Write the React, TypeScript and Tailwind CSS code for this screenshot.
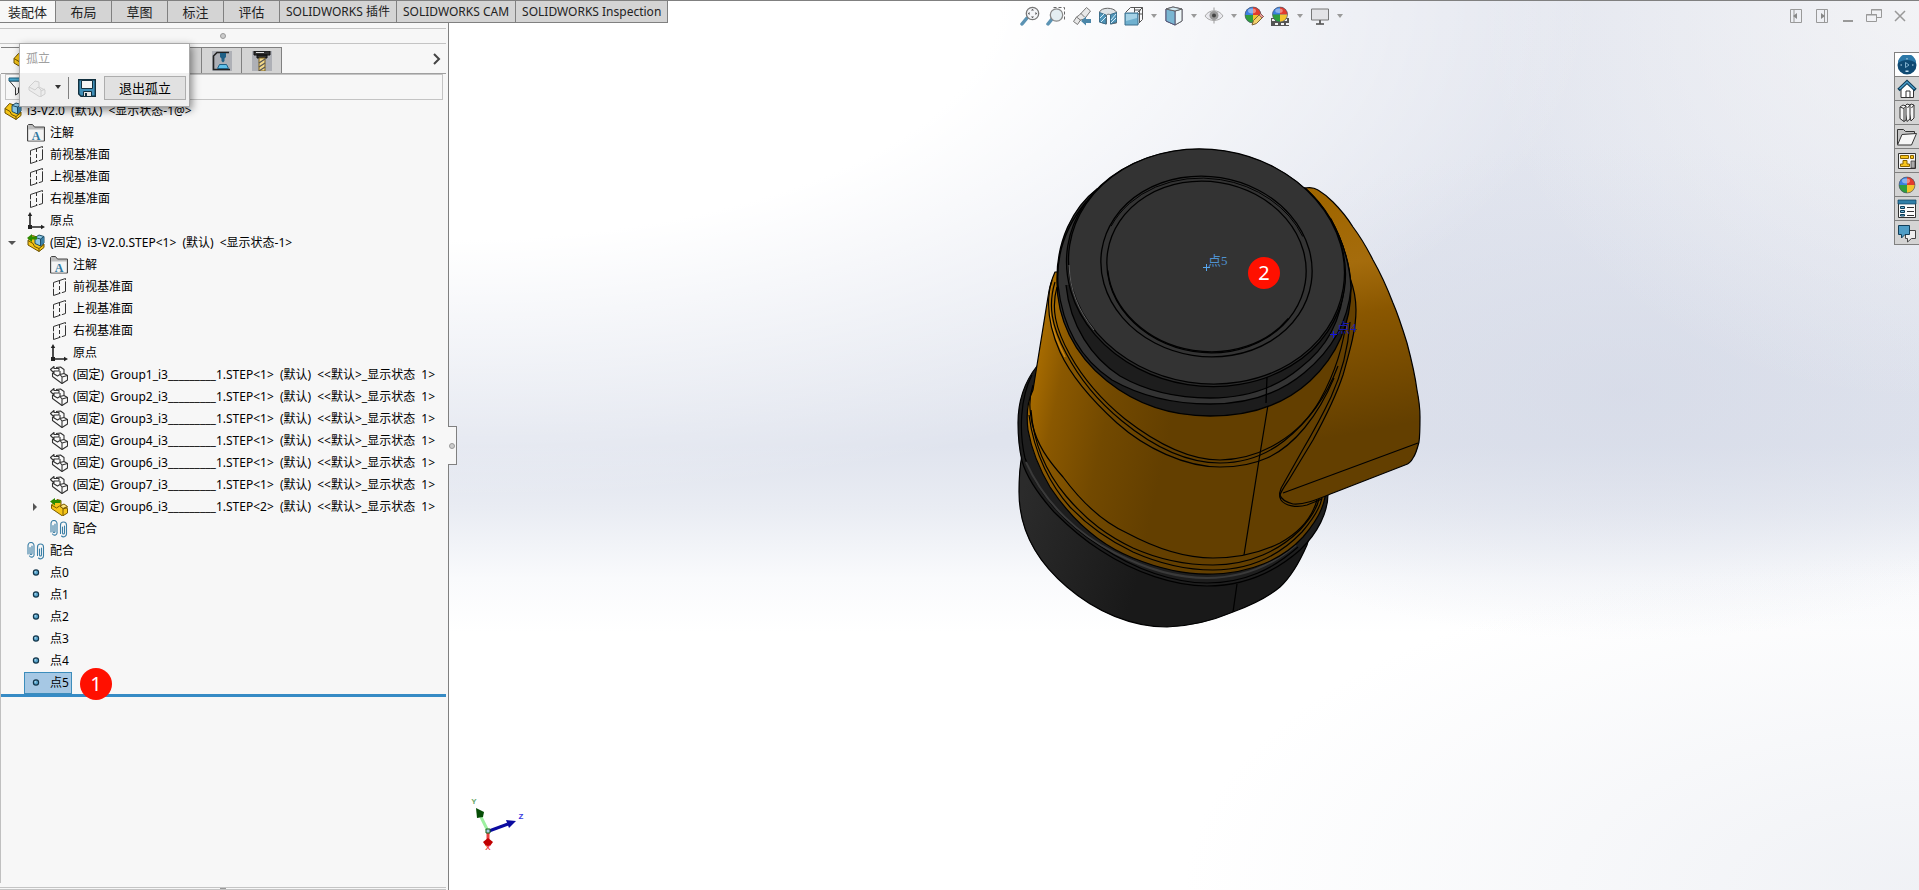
import { useState, type ReactNode } from "react";

const UI_FONT = "font-['Noto_Sans','Noto_Sans_CJK_SC',sans-serif]";

/* ------------------------------------------------------------------ icons */

function Icon({ children, className = "size-5", box = 20 }: { children: ReactNode; className?: string; box?: number }) {
  return (
    <svg viewBox={`0 0 ${box} ${box}`} className={`shrink-0 ${className}`} fill="none" aria-hidden="true">
      {children}
    </svg>
  );
}

const tree = "size-[18px]";

function AssemblyIcon({ fixed = false }: { fixed?: boolean }) {
  return (
    <Icon box={18} className={tree}>
      <path d="M1 6.500 5.500 1.500 10 3v5l7 2v3.500L12 17.500 1 11z" fill="#f5c518" stroke="#6b5000" />
      <path d="m1 6.500 5 3 1.500 3 4.500 2v3M12 14.500l5-4" stroke="#6b5000" />
      <path d="m8 3.500 4-2.500 5 1.500v6.500l-3.500 3L8 9.500z" fill="#8cc9e6" stroke="#1f4e66" />
      <path d="M13.500 5 17 2.500V9l-3.500 3z" fill="#3a7fa6" />
      <path d="M8 3.500 13.500 5 17 2.500M13.500 5v7" stroke="#1f4e66" />
      {fixed && <path d="M0 4 5 0v2.500h5v3H5V8z" fill="#2e8b00" />}
    </Icon>
  );
}

function AnnotationIcon() {
  return (
    <Icon box={18} className={tree}>
      <path d="M.5 17V1.500L1.500.500h4l2 2.500h10v14z" fill="#bdbdbd" stroke="#444" />
      <path d="M1.500 5.500h15v11h-15z" fill="#f4f4f4" />
      <text x="9" y="15.500" fontSize="12" fontWeight="700" textAnchor="middle" fill="#2f77a0" className="font-['Liberation_Serif',serif]">A</text>
    </Icon>
  );
}

function PlaneIcon() {
  return (
    <Icon box={18} className={tree}>
      <path d="M3.500 4.500 15.500.500v13l-12 4z" stroke="#333" strokeDasharray="14 1.500" />
      <path d="M9.500 2v14" stroke="#333" strokeDasharray="4 2" />
    </Icon>
  );
}

function OriginIcon() {
  return (
    <Icon box={18} className={tree}>
      <path d="M3 15V3M3 15h12" stroke="#222" strokeWidth="1.600" />
      <path d="M.8 4 3 0l2.200 4zM14 12.800l4 2.200-4 2.200zM1 13h4v4H1z" fill="#222" />
    </Icon>
  );
}

function PartIcon() {
  return (
    <Icon box={18} className={tree}>
      <g stroke="#333" strokeWidth="1.100" strokeLinejoin="round" fill="#fafafa">
        <path d="M2.500 7v3.500L12 17.500l5.500-3.500V9.500L14 7.500V3.500L10.500 1 6 1.500" />
        <path d="m2.500 7 5 3 2.500-1.500 2 2.500v6.500M12 11l5.500-1.500M10 8.500l4-1M10 8.500V5" fill="none" />
        <path d="M.5 3.500 4 .5v2h5v2.500H4v2z" />
      </g>
    </Icon>
  );
}

function FixedPartIcon() {
  return (
    <Icon box={18} className={tree}>
      <g stroke="#7a5a00" strokeLinejoin="round">
        <path d="M1.500 7 7 1.500l4 1v5l6.500 3V15l-5 3-11-7.500z" fill="#f5c518" />
        <path d="m1.500 7 5 3 3-2 3.500 2.500V18M13 11l4.500-1.500" />
        <path d="m10 8 4-2 3.500 2.500-4.500 2z" fill="#ffe680" />
      </g>
      <path d="M0 3.500 5 0v2h5.500v3H5v2.500z" fill="#2e8b00" />
    </Icon>
  );
}

function MatesIcon() {
  return (
    <Icon box={18} className={tree}>
      <g stroke="#3b7fa6" strokeWidth="1.100" strokeLinecap="round">
        <path d="M3 5.500v6a1 1 0 0 0 2 0V4M1 12V3.500a3 3 0 0 1 6 0V12a2.500 2.500 0 0 1-4.500 2" />
        <path d="M12.500 7v6a1 1 0 0 0 2 0V6M10.500 13.500V5a3 3 0 0 1 6 0v8.500a3 3 0 0 1-5 2.500" />
      </g>
    </Icon>
  );
}

function PointIcon() {
  return (
    <Icon box={18} className={tree}>
      <circle cx="9" cy="8.500" r="2.600" fill="#5aa5cc" stroke="#12354a" strokeWidth="1.200" />
      <circle cx="8.300" cy="7.800" r=".9" fill="#a9d6ec" />
    </Icon>
  );
}

function Caret() {
  return (
    <svg viewBox="0 0 8 5" className="h-[5px] w-2 shrink-0" aria-hidden="true">
      <path d="M1 0h6L4 4z" fill="#9a9a9a" />
    </svg>
  );
}

function Sphere({ r, cx, cy }: { r: number; cx: number; cy: number }) {
  return (
    <g>
      <circle cx={cx} cy={cy} r={r} fill="#2a66d8" />
      <path d={`M${cx} ${cy}V${cy - r}A${r} ${r} 0 0 1 ${cx + r} ${cy}z`} fill="#e23b2e" />
      <path d={`M${cx} ${cy}V${cy - r}A${r} ${r} 0 0 0 ${cx - r} ${cy}z`} fill="#3c7fe0" />
      <path d={`M${cx} ${cy}H${cx - r}A${r} ${r} 0 0 0 ${cx} ${cy + r}z`} fill="#2f9e3e" />
      <path d={`M${cx} ${cy}H${cx + r}A${r} ${r} 0 0 1 ${cx} ${cy + r}z`} fill="#f2c42c" />
      <ellipse cx={cx - 1} cy={cy - r * 0.5} rx={r * 0.5} ry={r * 0.3} fill="#fff" opacity=".4" />
      <circle cx={cx} cy={cy} r={r} stroke="#555" strokeWidth=".6" />
    </g>
  );
}

const hudIcons: { name: string; menu?: boolean; art: ReactNode }[] = [
  {
    name: "整屏显示全图",
    art: (
      <>
        <path d="m7 12-5 6" stroke="#5b93b3" strokeWidth="3.500" strokeLinecap="round" />
        <circle cx="12.500" cy="7.500" r="6.200" fill="#f4f5f8" stroke="#777" strokeWidth="1.300" />
        <path d="m12.500 2.800 1.500 1.800h-3zM12.500 12.200l1.500-1.800h-3zM7.800 7.500l1.800-1.500v3zM17.200 7.500 15.400 6v3z" fill="#555" />
      </>
    ),
  },
  {
    name: "局部放大",
    art: (
      <>
        <path d="M7.500 1.500h11v12" stroke="#666" strokeDasharray="3 2" />
        <path d="m6 13-4 5" stroke="#5b93b3" strokeWidth="3.500" strokeLinecap="round" />
        <circle cx="10.500" cy="9" r="6.200" fill="#e4eef2" stroke="#888" strokeWidth="1.300" />
      </>
    ),
  },
  {
    name: "上一视图",
    art: (
      <>
        <path d="m14.500 1.500 4 3.500-6 8-4 1-3 4.500-4-3 3-4.500 3-2z" fill="#e8e8e8" stroke="#777" />
        <path d="m8.500 7 4 4M4.500 11l4.500 3.500" stroke="#777" />
        <path d="m9 15 5-4.500V13h5v4h-5v2.500z" fill="#4b86a8" />
      </>
    ),
  },
  {
    name: "剖面视图",
    art: (
      <>
        <path d="M1.500 6c2-5 14-5 17 0v11l-6 1V9c-1-1-3-1-4 0v9l-7-2z" fill="#dfe3e6" stroke="#666" />
        <path d="M1.500 6.500 8 9v9l-6.500-2zM12.500 8.500l6-2V16l-6 2z" fill="#4f94b8" stroke="#3d6f8c" />
        <path d="m2 12 4-4M3 16l5-5M13 14l5-6M13 17l5-5" stroke="#d8eefa" />
      </>
    ),
  },
  {
    name: "视图定向",
    menu: true,
    art: (
      <>
        <path d="M6.500 1.500h12v12l-4 4M1.500 6.500l5-5M13.500 6.500l5-5M10.500 1.500v5M18 8h-4M10 4h7M15.500 4v12" stroke="#555" />
        <path d="M1 7h13v12H1z" fill="#6fb0cf" stroke="#3d6f8c" />
        <path d="M2 8h11v4L2 15z" fill="#a5d2e6" />
      </>
    ),
  },
  {
    name: "显示样式",
    menu: true,
    art: (
      <>
        <path d="m2 3 7-2 9 2v12l-7 4-9-4z" fill="#a9d3e6" stroke="#557" />
        <path d="m11 5 7-2v12l-7 4z" fill="#eef6fa" stroke="#666" />
        <path d="m2 3 9 2v14l-9-4z" fill="#7ab6d2" stroke="#557" />
        <path d="m2 3 7-2 9 2-7 2z" fill="#d5ebf4" stroke="#666" />
      </>
    ),
  },
  {
    name: "隐藏/显示项目",
    menu: true,
    art: (
      <>
        <path d="M1 10c4-7 14-7 18 0-4 6-14 6-18 0z" fill="#e9e9ee" stroke="#aaa" />
        <circle cx="10" cy="9.500" r="4.500" fill="#999" />
        <circle cx="10" cy="9.500" r="2" fill="#444" />
        <path d="M10 1.500v3M10 14.500v3" stroke="#999" />
      </>
    ),
  },
  {
    name: "编辑外观",
    art: (
      <>
        <Sphere cx={9} cy={9} r={8} />
        <path d="m8 19 1.500-4.500 7-7 3 3-7 7z" fill="#f3d06a" stroke="#7d6235" />
        <path d="m15 9 1.500-1.500 3 3L18 12z" fill="#e69a9a" stroke="#7d4a4a" strokeWidth=".7" />
      </>
    ),
  },
  {
    name: "应用布景",
    menu: true,
    art: (
      <>
        <path d="M1 12h18v8H1z" fill="#555" />
        <path d="M2 13h3v2H2zM8 13h3v2H8zM14 13h3v2h-3zM5 17h3v2H5zM11 17h3v2h-3zM16 17h3v2h-3z" fill="#f2f2f2" />
        <Sphere cx={10} cy={8.5} r={7.5} />
      </>
    ),
  },
  {
    name: "视图设定",
    menu: true,
    art: (
      <>
        <path d="M1.500 3h17v11h-17z" fill="#e3e3e6" stroke="#777" />
        <path d="M10 14v4" stroke="#666" strokeWidth="2" />
        <path d="M6 18h8" stroke="#555" strokeWidth="1.600" />
      </>
    ),
  },
];

const windowIcons: { name: string; art: ReactNode }[] = [
  { name: "展开左窗格", art: <path d="M4.500 3.500h11v13h-11zM8 4v12" /> },
  { name: "展开右窗格", art: <path d="M4.500 3.500h11v13h-11zM12.500 4v12" /> },
  { name: "最小化", art: <path d="M5 15h10" strokeWidth="2" /> },
  { name: "还原", art: <path d="M7.500 8V3.500h10v8H13M2.500 8.500h10v7h-10zM7 4h11M2 9h11" /> },
  { name: "关闭", art: <path d="m5 5 10 10M15 5 5 15" strokeWidth="1.500" /> },
];

const taskIcons: { name: string; art: ReactNode }[] = [
  {
    name: "3DEXPERIENCE",
    art: (
      <>
        <circle cx="10" cy="10" r="9.500" fill="#0f4a73" />
        <path d="M1 8a9 9 0 0 1 18 0c-5-4-13-4-18 0z" fill="#2c78a8" />
        <path d="M8.500 7.500 12 10l-3.500 2.500z" stroke="#9cc8e2" strokeWidth=".8" />
        <path d="M9.500 3h1v1.500h-1zM3.500 9.500H5v1H3.500zM15 9.500h1.500v1H15zM8.500 15.500h3V17h-3z" fill="#c4def0" />
      </>
    ),
  },
  {
    name: "SOLIDWORKS 资源",
    art: (
      <>
        <path d="M4 10v8.500h12.500V9L10 4z" fill="#fff" stroke="#333" />
        <path d="M9 18v-6h4v6" stroke="#333" />
        <path d="m1.500 11 8.500-8 8.500 8" stroke="#0d3d59" strokeWidth="3.500" />
        <path d="m2.500 10 7.500-7 7.500 7" stroke="#4a9cc9" strokeWidth="1.500" />
      </>
    ),
  },
  {
    name: "设计库",
    art: (
      <g stroke="#333" fill="#f4f4f4" strokeLinejoin="round">
        <path d="m11 4 3-3 3 1v13l-3 3z" />
        <path d="m7 4 3-3 3 1v14l-3 2.500z" />
        <path d="m3 4 3-2 3 1v14l-2 1.500-4-3z" />
        <path d="m3 4 4 1.500 2-2.500M7 5.500v13M10.500 5l2.500-3M14.500 5 17 2" />
      </g>
    ),
  },
  {
    name: "文件探索器",
    art: (
      <>
        <path d="M.5 17V2.500h6l2 2h9v4" fill="#c4c4c4" stroke="#333" />
        <path d="m5 7.500 14.500-1-5 11.500H.5z" fill="#f6f6f6" stroke="#333" />
      </>
    ),
  },
  {
    name: "视图调色板",
    art: (
      <>
        <path d="M1.500 2.500h17v15h-17z" fill="#f4f4f4" stroke="#333" />
        <path d="M3.500 4.500h8v3h-8zM13.500 4.500h3v3h-3zM6 9.500h4v3.500h2.500v2.500h-9V13H6z" fill="#f8c51c" stroke="#8a6400" />
        <path d="M14 10h4v7h-4z" fill="#aaa" stroke="#333" strokeWidth=".7" />
      </>
    ),
  },
  { name: "外观、布景和贴图", art: <Sphere cx={10} cy={10} r={8} /> },
  {
    name: "自定义属性",
    art: (
      <>
        <path d="M1.500 1.500h17v17h-17z" fill="#fbfbfb" stroke="#333" />
        <path d="M1 1h18v4H1z" fill="#2f7fa8" stroke="#0d3d59" strokeWidth=".7" />
        <path d="M3.500 7.500h4v2h-4zM3.500 11.500h4v2h-4zM3.500 15.500h4v1.500h-4z" fill="#6db4d6" stroke="#0d3d59" />
        <path d="M10 8.500h7M10 12.500h7M10 16.500h7" stroke="#333" />
      </>
    ),
  },
  {
    name: "SOLIDWORKS 论坛",
    art: (
      <>
        <path d="M8.500 7.500h10v8h-4l-4 3.500v-3.500h-2z" fill="#eee" stroke="#444" />
        <path d="M1.500 2.500h11v9H8L4.500 15v-3.500h-3z" fill="#4f9dc6" stroke="#123f5a" />
      </>
    ),
  },
];

/* ------------------------------------------------------------ tree content */

type NodeKind = "assembly" | "fixedAssembly" | "annotation" | "plane" | "origin" | "part" | "fixedPart" | "mates" | "point";
type TreeNode = { level: 0 | 1 | 2; kind: NodeKind; label: string; toggle?: "open" | "closed" };

const kindIcon: Record<NodeKind, ReactNode> = {
  assembly: <AssemblyIcon />,
  fixedAssembly: <AssemblyIcon fixed />,
  annotation: <AnnotationIcon />,
  plane: <PlaneIcon />,
  origin: <OriginIcon />,
  part: <PartIcon />,
  fixedPart: <FixedPartIcon />,
  mates: <MatesIcon />,
  point: <PointIcon />,
};

const basics = (level: 1 | 2): TreeNode[] => [
  { level, kind: "annotation", label: "注解" },
  { level, kind: "plane", label: "前视基准面" },
  { level, kind: "plane", label: "上视基准面" },
  { level, kind: "plane", label: "右视基准面" },
  { level, kind: "origin", label: "原点" },
];

const nodes: TreeNode[] = [
  { level: 0, kind: "assembly", label: "i3-V2.0 (默认) <显示状态-1@>" },
  ...basics(1),
  { level: 1, kind: "fixedAssembly", label: "(固定) i3-V2.0.STEP<1> (默认) <显示状态-1>", toggle: "open" },
  ...basics(2),
  ...[1, 2, 3, 4, 6, 7].map((n): TreeNode => ({
    level: 2,
    kind: "part",
    label: `(固定) Group${n}_i3_________1.STEP<1> (默认) <<默认>_显示状态 1>`,
  })),
  { level: 2, kind: "fixedPart", label: "(固定) Group6_i3_________1.STEP<2> (默认) <<默认>_显示状态 1>", toggle: "closed" },
  { level: 2, kind: "mates", label: "配合" },
  { level: 1, kind: "mates", label: "配合" },
  ...[0, 1, 2, 3, 4, 5].map((n): TreeNode => ({ level: 1, kind: "point", label: `点${n}` })),
];

const indent = { 0: "pl-0", 1: "pl-[3px]", 2: "pl-[26px]" } as const;

function Badge({ children, className = "" }: { children: ReactNode; className?: string }) {
  return (
    <span className={`flex size-8 items-center justify-center rounded-full bg-[#ff1000] text-xl leading-none text-white ${className}`}>
      {children}
    </span>
  );
}

/* Name, configuration and display state are set slightly apart. */
function NodeLabel({ text }: { text: string }) {
  return (
    <span>
      {text.split(" ").map((part, i) => (
        <span key={i} className={i > 0 ? "ml-[3px]" : ""}>
          {i > 0 ? ` ${part}` : part}
        </span>
      ))}
    </span>
  );
}

function FeatureTree() {
  const [selected, setSelected] = useState("点5");
  return (
    <ul role="tree" aria-label="特征树" className="border-b-3 border-[#368bc5] text-xs text-black">
      {nodes.map((node, i) => {
        const active = node.label === selected;
        return (
          <li key={i} role="treeitem" aria-selected={active} className={`relative flex h-[22px] items-center ${indent[node.level]}`}>
            {node.level > 0 && (
              <span className="flex w-5 shrink-0 items-center pl-1">
                {node.toggle && (
                  <button type="button" aria-label="展开或折叠" className="flex size-2 items-center justify-center">
                    <svg viewBox="0 0 8 8" className="size-2" aria-hidden="true">
                      <path d={node.toggle === "open" ? "M0 2h8L4 6z" : "M2 0v8l4-4z"} fill="#555" />
                    </svg>
                  </button>
                )}
              </span>
            )}
            <button
              type="button"
              onClick={() => setSelected(node.label)}
              className={`flex h-[22px] items-center gap-[5px] border px-[2px] whitespace-nowrap ${
                active ? "border-[#3c8dbc] bg-[#a6c8e4]" : "border-transparent"
              }`}
            >
              {kindIcon[node.kind]}
              <NodeLabel text={node.label} />
            </button>
            {active && <Badge className="absolute -top-1 left-[79px] z-10">1</Badge>}
          </li>
        );
      })}
    </ul>
  );
}

/* ---------------------------------------------------------------- panels */

const commandTabs = [
  { label: "装配体", size: "min-w-14 text-[13px]" },
  { label: "布局", size: "min-w-14 text-[13px]" },
  { label: "草图", size: "min-w-14 text-[13px]" },
  { label: "标注", size: "min-w-14 text-[13px]" },
  { label: "评估", size: "min-w-14 text-[13px]" },
  { label: "SOLIDWORKS 插件", size: "text-xs" },
  { label: "SOLIDWORKS CAM", size: "text-xs" },
  { label: "SOLIDWORKS Inspection", size: "text-xs" },
];

function CommandTabs() {
  return (
    <nav aria-label="命令管理器" className="absolute -top-px left-0 z-20 flex h-[23px] border-y border-[#808080] text-[#222]">
      {commandTabs.map((tab, i) => (
        <button
          key={tab.label}
          type="button"
          className={`flex items-center justify-center border-r border-[#808080] px-[6px] leading-5 whitespace-nowrap ${tab.size} ${
            i === 0 ? "bg-[#f7f7f7]" : "bg-[#d4d4d4]"
          }`}
        >
          {tab.label}
        </button>
      ))}
    </nav>
  );
}

function IsolateDialog() {
  return (
    <section
      aria-label="孤立"
      className="absolute top-[42px] left-[19px] z-30 w-[171px] border border-[#a8a8a8] bg-[#f0f0f0] shadow-[2px_3px_8px_rgba(0,0,0,0.45)]"
    >
      <h2 className="flex h-[29px] items-center bg-white px-[6px] text-xs text-[#a0a0a0]">孤立</h2>
      <div className="flex h-[33px] items-center pr-[3px] pb-1 pl-2">
        <button type="button" aria-label="零部件可见性" className="flex items-center gap-2">
          <Icon box={18} className={tree}>
            <path d="m1 8 6-6 4 1v5l6 3v4l-5 3-11-7z" fill="#ececec" stroke="#cfcfcf" />
            <path d="m1 8 6 3 3-3 3 3v7M13 12l4-2" stroke="#cfcfcf" />
          </Icon>
          <svg viewBox="0 0 8 5" className="h-[5px] w-2" aria-hidden="true">
            <path d="M1 0h6L4 4z" fill="#333" />
          </svg>
        </button>
        <span className="mr-[9px] ml-[6px] h-[22px] w-px bg-[#808080]" />
        <button type="button" aria-label="保存" className="mr-2">
          <Icon box={18} className={tree}>
            <path d="M.7.700h16.600v16.600H3L.7 15z" fill="#3f8fb8" stroke="#12303f" strokeWidth="1.400" />
            <path d="M3.500 1.500h11v8h-11z" fill="#f5f5f5" stroke="#12303f" />
            <path d="M5.500 12.500h8v5h-8z" fill="#e6e6e6" stroke="#12303f" />
            <path d="M7 14h2v3H7z" fill="#12303f" />
          </Icon>
        </button>
        <button type="button" className="h-6 flex-1 border border-[#adadad] bg-[#e1e1e1] text-[13px] leading-5 text-black">
          退出孤立
        </button>
      </div>
    </section>
  );
}

function ManagerTabs() {
  const tab = "flex w-10 items-center justify-center border-r border-[#808080] bg-[#d4d4d4]";
  return (
    <div className="flex h-[30px] items-end border-b border-[#a0a0a0]">
      <div className="flex h-[26px] border-t border-[#808080]">
        <button type="button" aria-label="特征管理器" className="flex w-[41px] items-center border-r border-[#808080] bg-[#f7f7f7] pl-3">
          <AssemblyIcon />
        </button>
        <button type="button" aria-label="属性管理器" className={tab} />
        <button type="button" aria-label="配置管理器" className={tab} />
        <button type="button" aria-label="尺寸专家" className={tab} />
        <button type="button" aria-label="显示管理器" className={tab} />
        <button type="button" aria-label="CAM 特征树" className={tab}>
          <Icon box={20}>
            <path d="M0 0h20v20H0z" fill="#aeb0b6" />
            <path d="M17 1.500H5L1.500 5v14M1 18.500h17" stroke="#222" strokeWidth="1.600" />
            <path d="M8 2h6v4l-1.500 1.500V10L11 11.500 9.500 10V7.500L8 6z" fill="#1f5f85" />
            <path d="M7.500 13.500h7l2 4h-11z" fill="#5fc0ea" stroke="#1f5f85" />
          </Icon>
        </button>
        <button type="button" aria-label="CAM 刀具树" className={tab}>
          <Icon box={20}>
            <path d="M0 0h20v20H0z" fill="#aeb0b6" />
            <path d="M2 0h16v4H2zM5 4h10v3H5z" fill="#333" stroke="#111" />
            <path d="M4 1.500h8" stroke="#ddd" />
            <path d="M7 7h6v13H7z" fill="#f2d98a" stroke="#7a6020" />
            <path d="m7 12 6-4M7 16l6-4M7 20l6-4" stroke="#555" strokeWidth="1.200" />
          </Icon>
        </button>
      </div>
      <button type="button" aria-label="更多" className="mb-1 ml-auto flex size-5 items-center justify-center">
        <svg viewBox="0 0 12 12" className="size-3" fill="none" aria-hidden="true">
          <path d="m4 1 5 5-5 5" stroke="#444" strokeWidth="2" />
        </svg>
      </button>
    </div>
  );
}

function SidePanel() {
  return (
    <aside className="relative z-10 flex w-[449px] shrink-0 flex-col border-r border-[#808080] bg-[#f7f7f7] pt-6">
      <div className="mr-[2px] flex h-[19px] flex-col border-b border-[#c4c4c4]">
        <span className="h-1 border-b border-[#c4c4c4]" />
        <span className="flex flex-1 items-center justify-center">
          <span className="size-[6px] rounded-full border border-[#999] bg-[#ccc]" />
        </span>
      </div>
      <div className="mr-[2px] pl-px">
        <ManagerTabs />
      </div>
      <div className="mr-[2px] mb-1 flex-1 border-l border-[#c0c0c0]">
        <label className="mr-[3px] ml-1 flex h-[26px] items-center border border-[#c4c4c4]">
          <svg viewBox="0 0 18 20" className="ml-0.5 h-5 w-[18px] shrink-0" fill="none" aria-hidden="true">
            <path d="m1.500 4 6 7v7l3-2v-5l6-7z" fill="#fafafa" stroke="#333" />
            <path d="M1 1h16v3H1z" fill="#49a6cc" stroke="#1d5f7c" />
          </svg>
          <input type="text" aria-label="过滤" className="h-5 min-w-0 flex-1 bg-transparent px-1 text-xs outline-none" />
        </label>
        <FeatureTree />
      </div>
      <div className="mr-[2px] flex h-[3px] justify-center border-y border-[#c4c4c4]">
        <span className="h-px w-[6px] bg-[#999]" />
      </div>
      <button
        type="button"
        aria-label="折叠面板"
        className="absolute top-[425px] -right-[9px] flex h-[39px] w-[9px] items-center justify-center border border-l-0 border-[#808080] bg-[#f7f7f7]"
      >
        <span className="size-[6px] shrink-0 rounded-full border border-[#999] bg-[#ccc]" />
      </button>
      <IsolateDialog />
    </aside>
  );
}

/* ----------------------------------------------------------------- model */

function Model() {
  return (
    <svg viewBox="449 1 1470 889" preserveAspectRatio="xMidYMid slice" className="absolute inset-0 size-full" fill="none" role="img" aria-label="i3 关节模型">
      <defs>
        <linearGradient id="body" gradientUnits="userSpaceOnUse" x1="1030" y1="400" x2="1170" y2="430">
          <stop offset="0" stopColor="#a56a00" />
          <stop offset=".18" stopColor="#8a5800" />
          <stop offset=".55" stopColor="#724900" />
          <stop offset="1" stopColor="#633f00" />
        </linearGradient>
        <linearGradient id="arm" gradientUnits="userSpaceOnUse" x1="1330" y1="200" x2="1372" y2="430">
          <stop offset="0" stopColor="#a06600" />
          <stop offset=".28" stopColor="#a56c0c" />
          <stop offset=".5" stopColor="#8a5700" />
          <stop offset="1" stopColor="#633f00" />
        </linearGradient>
        <linearGradient id="base" gradientUnits="userSpaceOnUse" x1="1020" y1="500" x2="1150" y2="540">
          <stop offset="0" stopColor="#2b2b2b" />
          <stop offset="1" stopColor="#191919" />
        </linearGradient>
        <linearGradient id="rim" gradientUnits="userSpaceOnUse" x1="1060" y1="300" x2="1130" y2="370">
          <stop offset="0" stopColor="#303030" />
          <stop offset="1" stopColor="#1c1c1c" />
        </linearGradient>
      </defs>

      <g stroke="#000" strokeWidth="1.200" strokeLinejoin="round">
        {/* lower housing */}
        <path d="M1022 455C1019 470 1019 478 1019 492 1019 528 1034 559 1067 587 1096 612 1132 627 1167 627 1194 626 1214 620 1233 612 1252 605 1267 598 1280 587 1292 576 1300 561 1307 545L1320 500z" fill="url(#base)" />
        <path d="M1237 584 1233 612" />
        {/* clamping ring */}
        <path d="M1037 366C1022 385 1018 405 1018 423 1018 437 1019 448 1022 461 1026 475 1038 494 1054 512 1070 528 1084 540 1100 550 1135 573 1175 586 1207 586 1245 586 1275 572 1300 550 1318 533 1328 512 1328 494V400z" fill="#1e1e1e" />
        <path d="M1032 375C1020 398 1019 432 1025 458 1036 490 1062 522 1100 546 1135 570 1175 583 1207 583 1245 583 1273 569 1298 547" />
        <path d="M1026 462C1045 505 1080 535 1115 553 1150 571 1180 578 1207 578 1245 578 1275 563 1296 545" stroke="#3a3a3a" strokeWidth="2" />

        {/* body */}
        <path d="M1055 272C1050 283 1049 290 1048 297L1033 390C1027 402 1026 414 1028 430 1032 452 1040 470 1050 487 1072 520 1100 545 1133 558 1160 569 1188 575 1213 574 1250 573 1282 560 1303 537 1316 522 1323 510 1325 497L1358 310 1353 265z" fill="url(#body)" />
        <path d="M1033 385C1028 400 1030 412 1032 423 1037 445 1048 460 1063 477 1083 504 1105 523 1127 533 1155 548 1185 558 1213 558 1240 558 1262 552 1280 543 1300 532 1312 518 1317 500" />
        <path d="M1031 410C1034 450 1050 477 1066 496 1088 522 1108 536 1133 548 1160 560 1188 565 1213 565 1250 565 1280 550 1300 530 1311 518 1317 508 1319 499" />
        <path d="M1029 415C1034 455 1052 487 1070 507 1090 528 1110 541 1133 552 1160 564 1188 570 1213 570 1250 570 1280 555 1302 532 1314 518 1320 508 1322 498" />
        <path d="M1268 405 1259 460 1244 555" />
        {/* shoulder bands */}
        <path d="M1051 286C1046 308 1051 330 1065 357" stroke="#c98512" strokeWidth="1.600" />
        <path d="M1052 280C1046 300 1048 325 1060 352 1072 378 1095 403 1117 423 1145 448 1185 467 1220 467 1240 467 1254 464 1267 458 1294 446 1318 416 1334 378" />
        <path d="M1055 282C1048 305 1051 325 1066 353 1080 380 1100 403 1122 421 1150 444 1185 463 1220 463 1245 463 1266 455 1284 441 1308 422 1326 398 1338 366" />
        <path d="M1057 287C1051 308 1055 328 1070 355 1084 380 1104 402 1125 419 1152 440 1185 460 1220 460 1262 459 1300 435 1320 400 1334 375 1344 345 1347 315" />

        {/* arm */}
        <path d="M1305 188C1310 187 1315 188 1318 190 1323 193 1328 197 1333 202 1341 210 1348 219 1353 227 1362 239 1368 250 1373 260 1381 274 1388 290 1393 303 1399 317 1403 330 1407 343 1411 358 1415 375 1417 390 1419 400 1420 408 1420 417 1420 427 1420 435 1419 442 1417 450 1416 454 1413 458 1411 462 1408 464 1405 465L1333 493C1318 499 1305 505 1293 504 1286 502 1281 499 1280 495 1282 489 1287 483 1290 478L1313 440C1325 418 1336 396 1343 375 1350 350 1356 330 1356 310 1356 298 1353 286 1350 278 1345 240 1330 210 1305 188z" fill="url(#arm)" />
        <path d="M1283 493 1418 443" />
        <path d="M1350 322C1348 350 1341 375 1331 397 1322 416 1312 434 1302 451L1284 483C1280 489 1278 495 1281 500 1285 506 1297 508 1307 505L1322 499" />
      </g>

      {/* cap */}
      <g stroke="#000" strokeWidth="1.300">
        <path d="M1097 189C1072 208 1057 242 1057 278 1056 318 1074 355 1107 381 1137 405 1172 416 1210 416 1250 416 1285 404 1310 381 1338 355 1351 322 1351 288 1350 252 1332 212 1305 188z" fill="url(#rim)" />
        <path d="M1058 285C1063 332 1085 362 1112 380 1142 397 1175 404 1210 404 1248 404 1280 393 1304 373 1332 350 1348 322 1351 288 1350 264 1342 240 1331 219L1086 202C1066 226 1056 254 1058 285z" fill="#333" />
        <path d="M1066 285C1070 326 1092 358 1120 376 1148 392 1178 398 1210 398 1246 398 1276 388 1300 368 1326 348 1342 322 1345 280" fill="#1d1d1d" />
        <ellipse cx="1206" cy="268" rx="140" ry="118" transform="rotate(9 1206 268)" fill="#2a2a2a" />
        <ellipse cx="1206.500" cy="266.500" rx="138.500" ry="117" transform="rotate(9 1206.500 266.500)" fill="#333" />
        <path d="M1069 265C1070 290 1078 310 1094 330" stroke="#777" strokeWidth=".8" />
        <ellipse cx="1206.500" cy="266.500" rx="106" ry="90" transform="rotate(9 1206.500 266.500)" />
        <ellipse cx="1206.500" cy="267" rx="105" ry="88.500" transform="rotate(9 1206.500 267)" strokeWidth=".9" strokeDasharray="0 330 230 1000" />
        <ellipse cx="1206.500" cy="267" rx="100" ry="85.500" transform="rotate(9 1206.500 267)" />
        <ellipse cx="1206.500" cy="267" rx="99.500" ry="84.500" transform="rotate(9 1206.500 267)" strokeDasharray="0 40 230 1000" />
        <path d="M1267 377 1266 403" />
      </g>

      {/* reference points */}
      <path d="M1203 267.500h7M1206.500 264v7" stroke="#58a8f0" />
      <text x="1208" y="265" fontSize="13" fill="#4f92d0" className="font-['Liberation_Serif','Noto_Sans_CJK_SC',serif]">点5</text>
      <path d="M1330 334.500h7M1333.500 331v7" stroke="#1414e0" />
      <text x="1337" y="332" fontSize="13" fill="#1b1bb0" className="font-['Liberation_Serif','Noto_Sans_CJK_SC',serif]">点4</text>

      {/* orientation triad */}
      <g>
        <path d="m488 831-7-14" stroke="#9df0a0" strokeWidth="3" />
        <path d="m476 808 8 4-1 5-6 1z" fill="#064d06" />
        <path d="M488 832v10" stroke="#e84040" strokeWidth="3" />
        <path d="m488 838 5 4-3 4h-4l-3-4z" fill="#c00000" />
        <path d="m489 831 19-7" stroke="#0a0aa0" strokeWidth="3" />
        <path d="m506 820 10 1-7 7z" fill="#0a0aa0" />
        <path d="M486 829h4v4h-4z" fill="#a8c8e8" stroke="#146414" />
        <g fontSize="8" fontWeight="700" textAnchor="middle" className="font-['Liberation_Sans',sans-serif]">
          <text x="474" y="804" fill="#6aa86a">Y</text>
          <text x="521" y="819" fill="#3a3ae0">Z</text>
          <text x="488" y="850" fill="#f04040">X</text>
        </g>
      </g>
    </svg>
  );
}

function Viewport() {
  return (
    <main className="relative flex min-w-0 flex-1 flex-col bg-[radial-gradient(ellipse_78%_56%_at_0%_0%,#ffffff_48%,rgba(255,255,255,0)_100%),radial-gradient(ellipse_50%_38%_at_100%_100%,rgba(236,238,243,0.8)_0%,rgba(255,255,255,0)_100%),radial-gradient(ellipse_30%_45%_at_100%_0%,rgba(246,246,247,0.8)_0%,rgba(246,246,247,0)_100%),radial-gradient(ellipse_35%_28%_at_80%_44%,rgba(210,215,229,0.6)_0%,rgba(214,219,232,0)_100%),linear-gradient(180deg,#e3e6ef_0%,#e0e4ee_50%,#e9ecf3_57%,#f9fafc_65%,#ffffff_71%)]">
      <Model />
      <div role="toolbar" aria-label="视图" className="relative flex h-[30px] items-center justify-center gap-[6px] pr-1">
        {hudIcons.map((icon) => (
          <button key={icon.name} type="button" aria-label={icon.name} className="flex items-center gap-[6px]">
            <Icon>{icon.art}</Icon>
            {icon.menu && <Caret />}
          </button>
        ))}
      </div>
      <div className="absolute top-[5px] right-[9px] flex gap-[6px]">
        {windowIcons.map((icon, i) => (
          <button key={icon.name} type="button" aria-label={icon.name}>
            <Icon>
              <g stroke="#999">{icon.art}</g>
              {i === 0 && <path d="m11 7-4 3 4 3z" fill="#888" />}
              {i === 1 && <path d="m9 7 4 3-4 3z" fill="#888" />}
            </Icon>
          </button>
        ))}
      </div>
      <nav aria-label="任务窗格" className="relative mt-[21px] flex w-[25px] flex-col self-end border-t border-l border-[#808080]">
        {taskIcons.map((icon, i) => (
          <button
            key={icon.name}
            type="button"
            aria-label={icon.name}
            className={`flex h-6 items-center justify-center border-b border-[#808080] ${i === 0 ? "bg-white" : "bg-[#d4d4d4]"}`}
          >
            <Icon>{icon.art}</Icon>
          </button>
        ))}
      </nav>
      <Badge className="absolute top-[256px] left-[calc(50%+64px)]">2</Badge>
    </main>
  );
}

export default function App() {
  return (
    <div className={`relative flex min-h-screen border-t border-[#808080] bg-white ${UI_FONT}`}>
      <CommandTabs />
      <SidePanel />
      <Viewport />
    </div>
  );
}
